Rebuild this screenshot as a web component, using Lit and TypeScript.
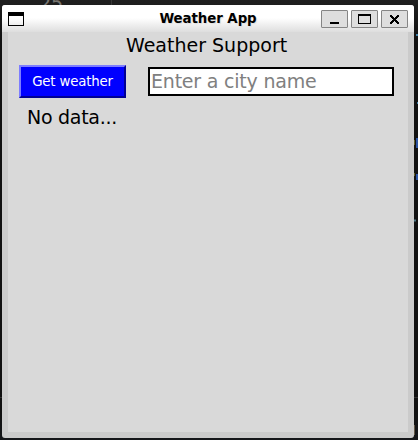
import { LitElement, html, css, svg } from "lit";
import { customElement } from "lit/decorators.js";

const ICONS = {
  minimize: svg`<path d="M9 12h9v2H9z" fill="#000"/>`,
  maximize: svg`<path fill-rule="evenodd" fill="#000" d="M7 4h13v10H7zM8 6v7h11V6z"/>`,
  close: svg`<path fill="#000" d="M9 5h2v1h1v1h1v1h1V7h1V6h1V5h2v2h-1v1h-1v1h-1v1h1v1h1v1h1v2h-2v-1h-1v-1h-1v-1h-1v1h-1v1h-1v1H9v-2h1v-1h1v-1h1V9h-1V8h-1V7H9z"/>`,
};

@customElement("app-root")
export class AppRoot extends LitElement {
  static styles = css`
    :host {
      display: block;
      position: relative;
      box-sizing: border-box;
      width: 418px;
      height: 440px;
      padding: 5px 4px 2px 2px;
      overflow: hidden;
      background: linear-gradient(#1f1f1f, #111 40px, #111 410px, #15171a);
      font-family: "DejaVu Sans", sans-serif;
      color: #000;
    }
    .desktop {
      position: absolute;
      left: 0;
      top: 0;
    }
    .behind {
      font-family: "DejaVu Sans Mono", monospace;
      font-size: 20px;
    }
    .window {
      position: relative;
      box-sizing: border-box;
      height: 433px;
      display: flex;
      flex-direction: column;
      background: #cbcbcb;
      border-radius: 3px;
      overflow: hidden;
    }
    .title-bar {
      flex: none;
      box-sizing: border-box;
      height: 27px;
      display: grid;
      grid-template-columns: 87px 1fr 87px;
      align-items: center;
      padding: 0 6px;
      background: linear-gradient(#fff 0, #fff 13px, #dedede 27px);
    }
    .menu-icon {
      display: block;
    }
    .title {
      text-align: center;
      font-size: 13.33px;
      line-height: 26px;
      font-weight: bold;
      letter-spacing: -0.05px;
      white-space: nowrap;
      text-shadow: 1px 1px 1px #ddd;
    }
    .controls {
      display: flex;
      gap: 3px;
      padding-top: 1px;
    }
    .control {
      box-sizing: border-box;
      width: 27px;
      height: 18px;
      padding: 0;
      border: 1px solid #858585;
      border-radius: 1px;
      background: #dedede;
    }
    .control svg {
      display: block;
      margin: -1px;
    }
    .content {
      width: 400px;
      height: 400px;
      margin-left: 6px;
      box-sizing: border-box;
      background: #d9d9d9;
      font-size: 19px;
    }
    .heading {
      padding-left: 118px;
      height: 33px;
      line-height: 27px;
    }
    .row {
      display: flex;
      align-items: center;
      gap: 22px;
      padding-left: 11px;
    }
    .get {
      box-sizing: border-box;
      width: 107px;
      height: 33px;
      padding: 0;
      border: 2px solid;
      border-color: #7d7dff #000094 #000094 #7d7dff;
      background: #00f;
      color: #fff;
      font: 13.33px "DejaVu Sans", sans-serif;
      letter-spacing: -0.18px;
      white-space: nowrap;
    }
    .city {
      box-sizing: border-box;
      width: 246px;
      height: 29px;
      padding: 0 1px 2px;
      border: 2px solid #000;
      border-radius: 0;
      background: #fff;
      outline: none;
      color: #000;
      font: 19px "DejaVu Sans", sans-serif;
      letter-spacing: -0.21px;
    }
    .city::placeholder {
      color: #808080;
      opacity: 1;
    }
    .result {
      padding: 8px 0 0 19px;
      line-height: 22px;
      letter-spacing: -0.28px;
    }
  `;

  render() {
    return html`
      <svg class="desktop" width="418" height="440">
        <text class="behind" x="39" y="10" fill="#777570">25</text>
        <path d="M111.5 0v5" stroke="#363636" />
        <path d="M416 35h2M417 103h2" stroke="#3f7fa3" stroke-width="2" />
        <path d="M417 138v10M417 174v6" stroke="#2b53a0" stroke-width="2" />
        <path d="M414.5 140v5M414.5 173v3" stroke="#625f2c" />
        <path d="M414 220.5h2" stroke="#4b7482" stroke-width="2" />
        <path d="M0 397.500h2M414 397.500h4" stroke="#333" />
        <path d="M414.500 425v10" stroke="#625747" />
      </svg>
      <div class="window">
        <div class="title-bar">
          <svg class="menu-icon" width="16" height="14">
            <path d="M0 0h16v14H0zM1 4v9h14V4z" fill="#000" fill-rule="evenodd" />
          </svg>
          <div class="title">Weather App</div>
          <div class="controls">
            ${(["minimize", "maximize", "close"] as const).map(
              (name) => html`<button class="control" aria-label=${name}>
                <svg width="27" height="18">${ICONS[name]}</svg>
              </button>`
            )}
          </div>
        </div>
        <div class="content">
          <div class="heading">Weather Support</div>
          <div class="row">
            <button class="get">Get weather</button>
            <input class="city" placeholder="Enter a city name" />
          </div>
          <div class="result">No data...</div>
        </div>
      </div>
    `;
  }
}
